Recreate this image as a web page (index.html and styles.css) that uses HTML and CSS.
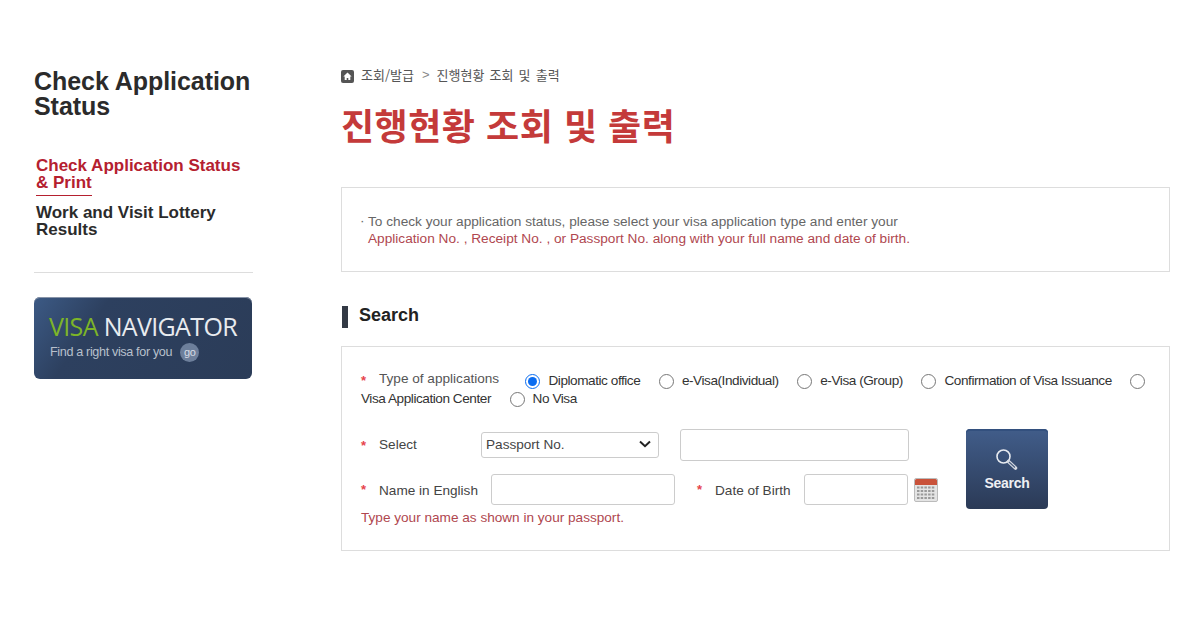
FILE: index.html
```html
<!DOCTYPE html>
<html lang="ko">
<head>
<meta charset="utf-8">
<title>진행현황 조회 및 출력</title>
<link rel="stylesheet" href="styles.css">
</head>
<body>
<div class="page">
  <aside class="side">
    <h2 class="side-title">Check Application Status</h2>
    <nav class="side-nav">
      <a class="nav-item active"><span>Check Application Status &amp; Print</span></a>
      <a class="nav-item"><span>Work and Visit Lottery Results</span></a>
    </nav>
    <a class="banner">
      <div class="banner-title"><span class="green">VISA</span> NAVIGATOR</div>
      <div class="banner-sub">Find a right visa for you <span class="go">go</span></div>
    </a>
  </aside>
  <main class="main">
    <div class="crumb">
      <svg class="home" width="13" height="13" viewBox="0 0 13 13"><rect width="13" height="13" rx="2" fill="#555"/><path d="M6.5 2.6 2.4 6.5h1.3v3.6h2v-2.2h1.6v2.2h2V6.5h1.3z" fill="#fff"/></svg>
      <span class="crumb-text">조회/발급</span><span class="gt">&gt;</span><span class="crumb-text">진행현황 조회 및 출력</span>
    </div>
    <h1 class="page-title">진행현황 조회 및 출력</h1>
    <section class="notice">
      <p class="note-line"><span class="dot">·</span>To check your application status, please select your visa application type and enter your</p>
      <p class="note-line red">Application No. , Receipt No. , or Passport No. along with your full name and date of birth.</p>
    </section>
    <h3 class="section-title">Search</h3>
    <form class="panel">
      <div class="types">
        <span class="req">*</span><span class="types-label">Type of applications</span>
        <input class="radio first" type="radio" name="t" checked><span class="opt">Diplomatic office</span>
        <input class="radio" type="radio" name="t"><span class="opt">e-Visa(Individual)</span>
        <input class="radio" type="radio" name="t"><span class="opt">e-Visa (Group)</span>
        <input class="radio" type="radio" name="t"><span class="opt">Confirmation of Visa Issuance</span>
        <input class="radio" type="radio" name="t"><span class="opt">Visa Application Center</span>
        <input class="radio" type="radio" name="t"><span class="opt">No Visa</span>
      </div>
      <div class="form-body">
        <div class="fields">
          <div class="row row-select">
            <span class="req">*</span><label class="lbl lbl-select">Select</label>
            <div class="select-box"><span>Passport No.</span>
              <svg width="12" height="8" viewBox="0 0 12 8"><path d="M1 1.5 6 6.2l5-4.7" fill="none" stroke="#222" stroke-width="2"/></svg>
            </div>
            <input class="input input-no" type="text">
          </div>
          <div class="row row-name">
            <span class="req">*</span><label class="lbl lbl-name">Name in English</label>
            <input class="input input-name" type="text">
            <span class="req req-dob">*</span><label class="lbl lbl-dob">Date of Birth</label>
            <input class="input input-dob" type="text">
            <svg class="cal" width="24" height="24" viewBox="0 0 24 24"><rect x=".5" y=".5" width="23" height="23" rx="1.5" fill="#e4e4e4" stroke="#bbb"/><path d="M1 2.5A1.5 1.5 0 0 1 2.5 1h19A1.5 1.5 0 0 1 23 2.5V7H1z" fill="#c9523a"/><path d="M3 9.500h18M3 13h18M3 16.500h18M3 20h18" stroke="#999" stroke-width="2" stroke-dasharray="2.500 1.200"/></svg>
          </div>
          <p class="hint">Type your name as shown in your passport.</p>
        </div>
        <button class="search-btn" type="button">
          <svg width="24" height="24" viewBox="0 0 24 24"><circle cx="8.500" cy="8.500" r="6.500" fill="none" stroke="#e8ebf0" stroke-width="1.600"/><path d="M13.500 13.500l7 6.500" stroke="#d8dce4" stroke-width="3.600" stroke-linecap="round"/><path d="M14 14l6 5.500" stroke="#4a5f80" stroke-width="1.200"/></svg>
          <span>Search</span>
        </button>
      </div>
    </form>
  </main>
</div>
</body>
</html>
```
FILE: styles.css
```css
* { box-sizing: border-box; }
html, body { margin: 0; padding: 0; background: #fff; }
body { font-family: "Liberation Sans", Arial, "Noto Sans CJK KR", sans-serif; color: #444; width: 1200px; height: 630px; overflow: hidden; }
.page { display: flex; padding: 69px 30px 0 34px; }
.side { width: 219px; margin-right: 88px; flex: none; }
.side-title { margin: 0; font-size: 25px; line-height: 25px; font-weight: bold; color: #2b2b2b; letter-spacing: -.05px; }
.side-nav { display: flex; flex-direction: column; align-items: flex-start; padding: 38px 0 34px 2px; border-bottom: 1px solid #ddd; }
.nav-item { font-size: 17px; line-height: 17px; font-weight: bold; color: #2b2b2b; width: 208px; }
.nav-item.active { color: #b5202f; padding-bottom: 5px; margin-bottom: 8px; width: 205px; position: relative; }
.nav-item.active::after { content: ""; position: absolute; left: 0; bottom: 0; width: 56px; height: 1px; background: #b5202f; }
.banner { display: block; margin-top: 24px; width: 218px; height: 82px; border-radius: 6px; background: linear-gradient(125deg, #3c5a85 0, #2d405f 28%, #2b3c58 100%); padding: 15px 0 0 15px; box-shadow: inset 0 1px 0 #8894a8; }
.banner-title { font-family: "Open Sans", sans-serif; font-size: 25px; font-weight: 500; line-height: 28px; color: #e8ebef; letter-spacing: -.65px; white-space: nowrap; }
.green { color: #7db528; }
.banner-sub { display: flex; align-items: center; font-size: 12.600px; line-height: 20px; color: #b8c0cc; letter-spacing: -.35px; white-space: pre; margin-top: 2px; padding-left: 1px; }
.go { display: inline-block; width: 19px; height: 19px; border-radius: 50%; background: #6d7f9b; color: #d8dde6; font-size: 11px; line-height: 18px; text-align: center; margin-left: 5px; }
.main { width: 829px; flex: none; }
.crumb { display: flex; align-items: center; height: 14px; font-family: "Noto Sans CJK KR", sans-serif; font-size: 13px; line-height: 14px; color: #555; word-spacing: 1.500px; }
.crumb-text { margin-bottom: 2px; }
.home { margin-right: 7px; }
.gt { margin: 0 7px 2px 8px; color: #888; font-family: "Liberation Sans", sans-serif; }
.page-title { margin: 16px 0 0; font-family: "Noto Sans CJK KR", sans-serif; font-size: 36px; line-height: 50px; font-weight: 700; color: #c43a3a; letter-spacing: .5px; }
.notice { margin-top: 38px; height: 85px; border: 1px solid #ddd; padding: 25px 0 0 26px; }
.note-line { margin: 0; font-size: 13.670px; line-height: 17px; color: #666; position: relative; white-space: nowrap; }
.note-line.red { color: #b0474f; }
.dot { position: absolute; left: -8px; top: -1px; }
.section-title { margin: 34px 0 18px 1px; height: 22px; border-left: 6px solid #333a45; padding-left: 11px; font-size: 18px; line-height: 18px; font-weight: bold; color: #222; }
.panel { height: 205px; border: 1px solid #ddd; padding: 25px 10px 0 19px; }
.req { color: #e6444c; font-size: 13px; display: inline-block; width: 18px; font-weight: bold; }
.types { font-size: 13.600px; line-height: 18px; color: #333; letter-spacing: -.45px; }
.types-label { color: #555; letter-spacing: 0; position: relative; top: -2px; }
.radio { width: 15px; height: 15px; margin: 0 8px 0 15.300px; vertical-align: -4px; accent-color: #0a6cf0; }
.radio.first { margin-left: 23px; }
.opt { display: inline-block; white-space: nowrap; }
.form-body { display: flex; margin-top: 21px; }
.fields { width: 577px; flex: none; }
.row { display: flex; align-items: center; font-size: 13.600px; color: #444; }
.row-select { height: 32px; }
.row-name { height: 31px; margin-top: 13px; }
.lbl-select { width: 102px; margin-bottom: 2px; }
.lbl-name { width: 112px; margin-top: 2px; }
.lbl-dob { width: 89px; margin-top: 2px; }
.req-dob { margin-left: 22px; }
.select-box { display: flex; align-items: center; justify-content: space-between; width: 178px; height: 26px; border: 1px solid #ccc; border-radius: 3px; padding: 0 7px 2px 4px; margin-right: 21px; }
.input { height: 31px; border: 1px solid #ccc; border-radius: 3px; background: #fff; padding: 0; }
.input-no { width: 229px; height: 32px; }
.input-name { width: 184px; }
.input-dob { width: 104px; }
.cal { margin-left: 6px; }
.hint { margin: 5px 0 0; font-size: 13.600px; line-height: 16px; color: #b0474f; }
.search-btn { display: flex; flex-direction: column; align-items: center; width: 82px; height: 80px; margin-left: 28px; padding: 19px 0 0; border: 0; border-radius: 4px; background: linear-gradient(#415d8a, #2b3a56); box-shadow: inset 0 2px 0 #33507e; color: #eef0f4; font-family: "Liberation Sans", sans-serif; font-size: 14px; font-weight: bold; letter-spacing: -.3px; }
.search-btn span { margin-top: 3px; }
```
